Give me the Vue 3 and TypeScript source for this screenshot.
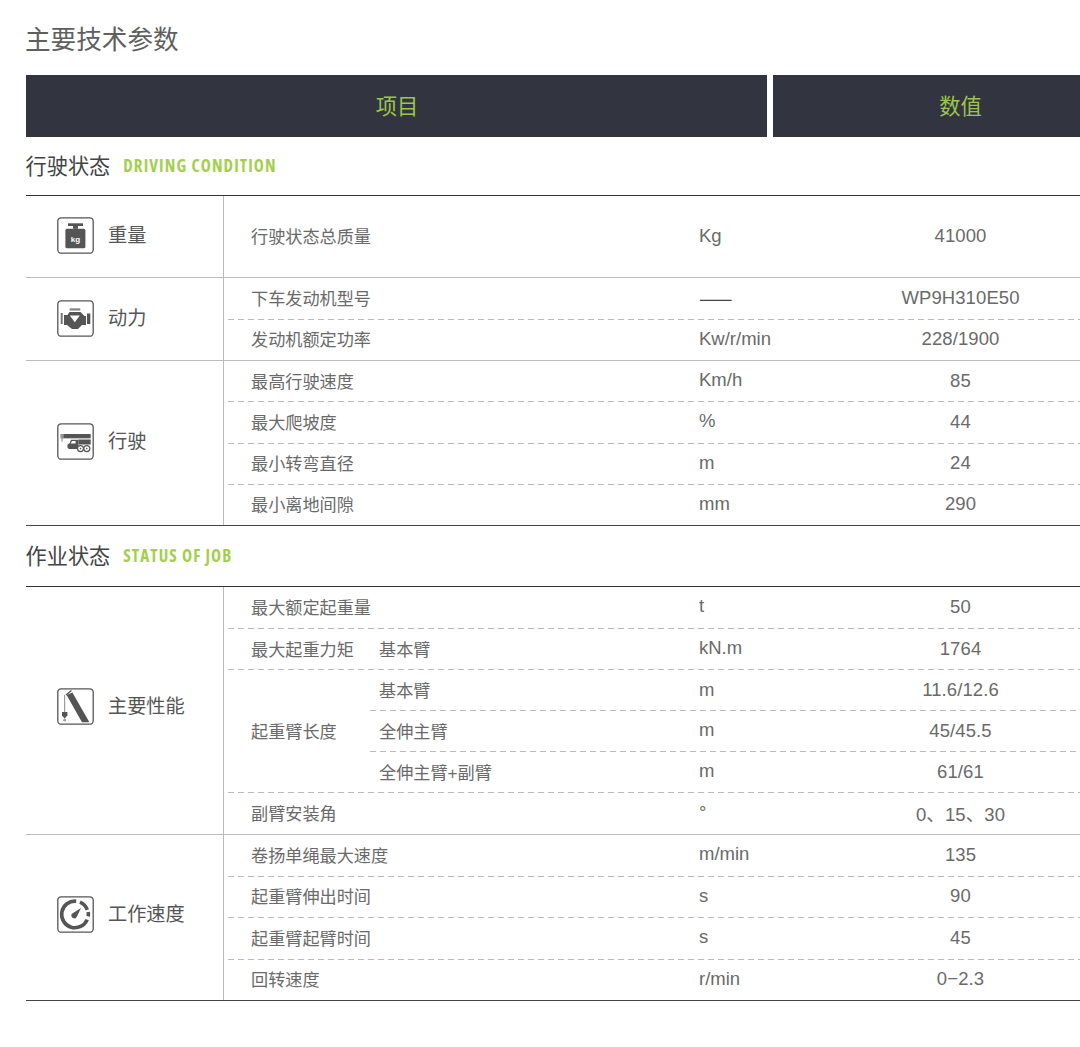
<script setup lang="ts">
interface Line {
  sub?: string;
  unit: string;
  value: string;
}

interface Row {
  label?: string;
  lines: Line[];
}

interface Group {
  icon: string;
  name: string;
  height: number;
  lift: number;
  rows: Row[];
}

interface Section {
  title: string;
  en: string;
  groups: Group[];
}

const one = (label: string, unit: string, value: string, sub?: string): Row => ({
  label,
  lines: [{ sub, unit, value }],
});

const sections: Section[] = [
  {
    title: "行驶状态",
    en: "DRIVING CONDITION",
    groups: [
      { icon: "weight", name: "重量", height: 82, lift: 2, rows: [one("行驶状态总质量", "Kg", "41000")] },
      {
        icon: "engine",
        name: "动力",
        height: 83,
        lift: 2,
        rows: [one("下车发动机型号", "——", "WP9H310E50"), one("发动机额定功率", "Kw/r/min", "228/1900")],
      },
      {
        icon: "truck",
        name: "行驶",
        height: 165,
        lift: 3,
        rows: [
          one("最高行驶速度", "Km/h", "85"),
          one("最大爬坡度", "%", "44"),
          one("最小转弯直径", "m", "24"),
          one("最小离地间隙", "mm", "290"),
        ],
      },
    ],
  },
  {
    title: "作业状态",
    en: "STATUS OF JOB",
    groups: [
      {
        icon: "crane",
        name: "主要性能",
        height: 248,
        lift: 9,
        rows: [
          one("最大额定起重量", "t", "50"),
          one("最大起重力矩", "kN.m", "1764", "基本臂"),
          {
            label: "起重臂长度",
            lines: [
              { sub: "基本臂", unit: "m", value: "11.6/12.6" },
              { sub: "全伸主臂", unit: "m", value: "45/45.5" },
              { sub: "全伸主臂+副臂", unit: "m", value: "61/61" },
            ],
          },
          one("副臂安装角", "°", "0、15、30"),
        ],
      },
      {
        icon: "gauge",
        name: "工作速度",
        height: 166,
        lift: 7,
        rows: [
          one("卷扬单绳最大速度", "m/min", "135"),
          one("起重臂伸出时间", "s", "90"),
          one("起重臂起臂时间", "s", "45"),
          one("回转速度", "r/min", "0−2.3"),
        ],
      },
    ],
  },
];
</script>

<template>
  <div class="page">
    <div class="sheet">
      <h1 class="title">主要技术参数</h1>
      <div class="head">
        <div class="head-cell">项目</div>
        <div class="head-cell">数值</div>
      </div>

      <section v-for="section in sections" :key="section.title">
        <h2 class="section-head">
          <span>{{ section.title }}</span>
          <em>{{ section.en }}</em>
        </h2>
        <div class="table">
          <div
            v-for="group in section.groups"
            :key="group.name"
            class="group"
            :style="{ height: group.height + 'px' }"
          >
            <div class="group-name" :style="{ paddingBottom: group.lift + 'px' }">
              <svg class="icon" viewBox="0 0 37 37" width="37" height="37">
                <rect x="0.8" y="0.8" width="35.4" height="35.4" rx="3.5" fill="#fff" stroke="#555" stroke-width="1.3" />
                <g v-if="group.icon === 'weight'" fill="#555">
                  <rect x="11" y="6.3" width="15" height="2.7" />
                  <rect x="16" y="9" width="5" height="2.8" />
                  <rect x="8.4" y="11.8" width="20" height="19.5" rx="1.5" />
                  <text x="18.4" y="24.5" text-anchor="middle" class="kg">kg</text>
                </g>
                <g v-else-if="group.icon === 'engine'" fill="#555">
                  <rect x="12.7" y="8.3" width="10.6" height="2.3" fill="#888" />
                  <rect x="3.7" y="13" width="2" height="11" fill="#777" />
                  <rect x="30" y="13.5" width="3.3" height="10.5" />
                  <path d="M12.5 12h11l4 4H29v9h-4l-4 4h-6l-5-4H7V15h3.5z" />
                  <path d="M12.8 15.5h10l-5 6.7z" fill="#fff" />
                </g>
                <g v-else-if="group.icon === 'truck'" fill="#555">
                  <rect x="3.7" y="11" width="30" height="4.3" />
                  <rect x="3.7" y="11" width="3" height="4.3" fill="#999" />
                  <rect x="4.5" y="15.3" width="1" height="3.5" fill="#888" />
                  <path d="M14 16.8h7.5v9.2H12l-1.5-1.2v-3.3l2-1.2z" />
                  <path d="M15 18h3.6v2.4h-5z" fill="#fff" />
                  <path d="M21.5 16.5h12.2v5H21.5z" />
                  <circle cx="23.5" cy="25.6" r="3" fill="#fff" stroke="#555" stroke-width="1.2" />
                  <circle cx="29.8" cy="25.6" r="3" fill="#fff" stroke="#555" stroke-width="1.2" />
                  <circle cx="23.5" cy="25.6" r="0.8" />
                  <circle cx="29.8" cy="25.6" r="0.8" />
                </g>
                <g v-else-if="group.icon === 'crane'" fill="#555">
                  <path d="M9.6 7 15.4 4.6 32.4 34.3H25z" />
                  <path d="M9 7 14.4 2.4" stroke="#555" stroke-width="1.3" />
                  <path d="M7.7 7v17" stroke="#888" stroke-width="1" fill="none" />
                  <path d="M5 24h5.4v3.4L7.7 30.4 5 27.4z" />
                  <circle cx="7.7" cy="32" r="1" fill="none" stroke="#555" stroke-width="0.7" />
                </g>
                <g v-else fill="none" stroke="#555" stroke-width="3.6">
                  <path d="M30.2 23.6A13.3 13.3 0 1 1 19.2 5.2" />
                  <path d="M23 6.2a13.3 13.3 0 0 1 7.3 7.6" />
                  <path d="M31.2 16a13.3 13.3 0 0 1 0 4.4" />
                  <path d="M24 12 19.7 21a2.8 2.8 0 1 1-4.4-3.4z" fill="#555" stroke="none" />
                </g>
              </svg>
              <span class="group-text">{{ group.name }}</span>
            </div>

            <div class="rows">
              <div
                v-for="row in group.rows"
                :key="row.label"
                class="row"
                :style="{ flexGrow: row.lines.length }"
              >
                <div class="label">{{ row.label }}</div>
                <div class="lines">
                  <div v-for="line in row.lines" :key="line.value" class="line">
                    <span class="sub">{{ line.sub }}</span>
                    <span class="unit" :class="{ dash: line.unit === '——' }">{{ line.unit }}</span>
                    <span class="value">{{ line.value }}</span>
                  </div>
                </div>
              </div>
            </div>
          </div>
        </div>
      </section>
    </div>
  </div>
</template>

<style scoped>
.page {
  width: 1080px;
  height: 1047px;
  overflow: hidden;
  background: #fff;
  color: #6a6a6a;
  font-family: "Liberation Sans", "Noto Sans CJK SC", sans-serif;
}

.sheet {
  width: 1121px;
  margin-left: 26px;
}

.title {
  margin: 0 0 0 -1px;
  height: 75px;
  font-size: 25.6px;
  font-weight: 400;
  line-height: 81px;
  color: #5f5f5f;
}

.head {
  display: grid;
  grid-template-columns: 741px 374px;
  gap: 6px;
}

.head-cell {
  height: 62px;
  padding-left: 1px;
  box-sizing: border-box;
  background: #32343f;
  color: #9bc64a;
  font-size: 21.3px;
  line-height: 64px;
  text-align: center;
}

.section-head {
  display: flex;
  align-items: center;
  gap: 13px;
  box-sizing: border-box;
  margin: 0 0 0 -0.5px;
  height: 58px;
  padding-bottom: 4px;
  font-size: 21.2px;
  font-weight: 400;
  color: #444;
}

section + section .section-head {
  height: 60px;
}

.section-head em {
  margin-top: 3px;
  font-family: "Open Sans", "Liberation Sans", sans-serif;
  font-size: 17px;
  font-stretch: 87.5%;
  font-style: normal;
  font-weight: 700;
  letter-spacing: 1.1px;
  color: #a3cf4d;
}

.table {
  border-top: 1px solid #333;
}

.group {
  display: flex;
  box-sizing: border-box;
  border-bottom: 1px solid #bbb;
}

.group:last-child {
  border-bottom-color: #444;
}

.group-name {
  display: flex;
  flex: 0 0 197px;
  align-items: center;
  gap: 14px;
  box-sizing: border-box;
  padding-left: 31px;
  font-size: 19.2px;
  color: #555;
}

.group-text {
  margin-bottom: 3px;
}

.icon {
  display: block;
  flex: none;
}

.kg {
  fill: #fff;
  font-size: 8px;
  font-weight: 700;
}

.rows {
  display: flex;
  flex: 1;
  flex-direction: column;
  border-left: 1px solid #bbb;
}

.row,
.line {
  background: repeating-linear-gradient(90deg, #bbb 0 6px, transparent 6px 10px) left bottom / 100% 1px no-repeat;
}

.row {
  display: flex;
  flex-basis: 0;
  margin-left: 4px;
  padding: 0 0 1px 23px;
  font-size: 17.15px;
}

.row:last-child {
  background: none;
  padding-bottom: 0;
}

.label {
  display: flex;
  flex: 0 0 119px;
  align-items: center;
  padding-bottom: 2px;
  white-space: nowrap;
}

.lines {
  display: flex;
  flex: 1;
  flex-direction: column;
}

.line {
  display: flex;
  flex: 1;
  align-items: center;
  padding-bottom: 1px;
}

.line:last-child {
  background: none;
}

.sub {
  flex: 1;
  padding-left: 9px;
  margin-bottom: 1px;
}

.unit {
  flex: 0 0 74px;
  font-size: 18.5px;
  margin-bottom: 1px;
}

.unit.dash {
  font-family: "Noto Sans CJK SC", sans-serif;
  font-size: 20px;
  color: #444;
}

.value {
  flex: 0 0 374px;
  box-sizing: border-box;
  padding-left: 1px;
  font-size: 18.5px;
  letter-spacing: 0.1px;
  text-align: center;
}
</style>
